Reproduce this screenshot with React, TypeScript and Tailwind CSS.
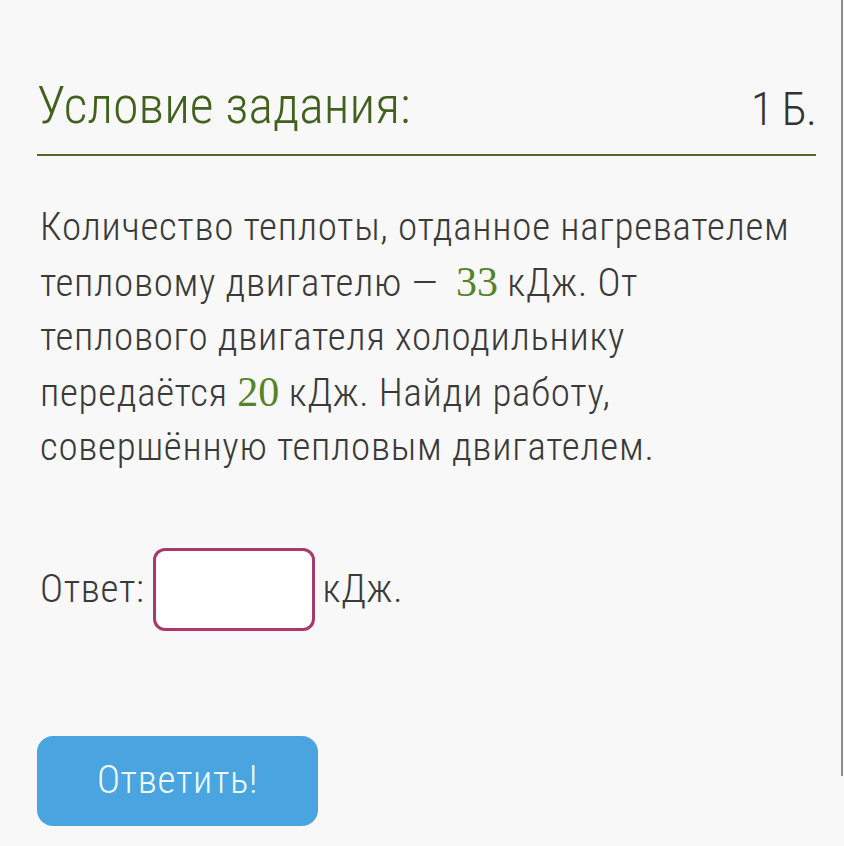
export default function App() {
  return (
    <div className="w-[844px] h-[846px] bg-[#f8f8f8] font-['Roboto',sans-serif] font-light font-stretch-condensed">
      <div className="w-[843px] h-[776px] border-r-2 border-[#8c8c8c] pl-[37px] pr-[25px] pt-[80px]">
        {/* Header */}
        <div className="flex items-end justify-between border-b-2 border-[#4e6a2b] pb-[22px]">
          <h2 className="text-[52px] leading-none text-[#41611d]">Условие задания:</h2>
          <span className="text-[46px] leading-none text-[#333] tracking-[-1px]">1 Б.</span>
        </div>

        {/* Task */}
        <p className="mt-[44px] pl-[3px] text-[39px] leading-[54.5px] text-[#3a3a3a] tracking-[0.7px]">
          Количество теплоты, отданное нагревателем
          <br />
          тепловому двигателю —{" "}
          <span className="ml-[8px] font-['Liberation_Serif',serif] font-normal text-[42px] tracking-normal text-[#55822a]">33</span> кДж. От
          <br />
          теплового двигателя холодильнику
          <br />
          передаётся{" "}
          <span className="font-['Liberation_Serif',serif] font-normal text-[42px] tracking-normal text-[#55822a]">20</span> кДж. Найди работу,
          <br />
          совершённую тепловым двигателем.
        </p>

        {/* Answer */}
        <div className="mt-[73px] pl-[3px] flex items-center gap-[8px] text-[39px] tracking-[0.7px] text-[#3a3a3a]">
          <span>Ответ:</span>
          <div className="w-[162px] h-[83px] border-[3px] border-[#a83a6b] rounded-[12px] bg-white" />
          <span>кДж.</span>
        </div>

        <button className="mt-[105px] w-[281px] h-[90px] rounded-[16px] bg-[#4aa4df] text-[#effcff] text-[39px] tracking-[0.7px] font-light">
          Ответить!
        </button>
      </div>
    </div>
  );
}
